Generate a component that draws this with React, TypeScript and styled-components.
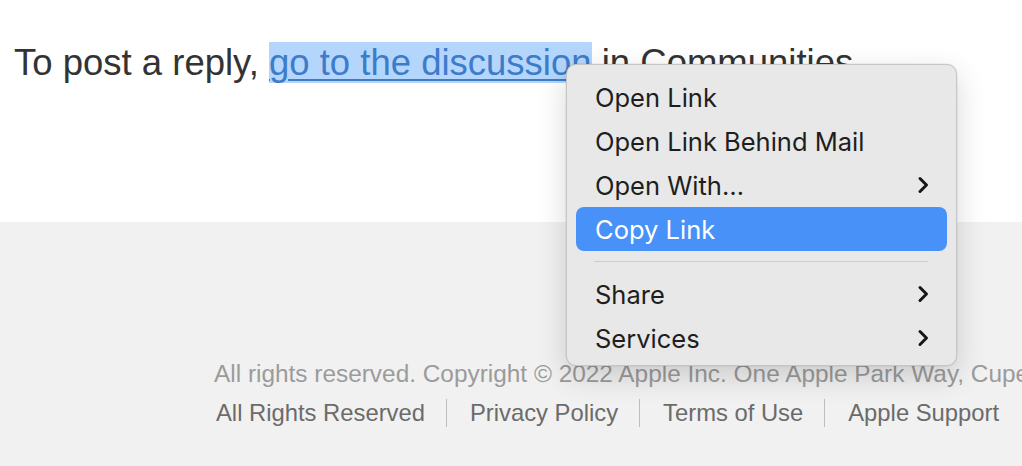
import { FC } from 'react';
import styled, { createGlobalStyle } from 'styled-components';

const GlobalStyle = createGlobalStyle`
  html, body {
    margin: 0;
    padding: 0;
    background: #f1f1f1;
    overflow: hidden;
  }
  #root {
    width: 1022px;
    height: 466px;
  }
`;

type MenuEntry =
  | { kind: 'item'; label: string; submenu?: boolean; active?: boolean }
  | { kind: 'separator' };

const menuEntries: MenuEntry[] = [
  { kind: 'item', label: 'Open Link' },
  { kind: 'item', label: 'Open Link Behind Mail' },
  { kind: 'item', label: 'Open With…', submenu: true },
  { kind: 'item', label: 'Copy Link', active: true },
  { kind: 'separator' },
  { kind: 'item', label: 'Share', submenu: true },
  { kind: 'item', label: 'Services', submenu: true },
];

const footerLinks = ['All Rights Reserved', 'Privacy Policy', 'Terms of Use', 'Apple Support'];

const Chevron: FC<{ light?: boolean }> = ({ light }) => (
  <svg width="14" height="20" viewBox="0 0 14 20" fill="none">
    <path
      d="M4 3.5 L10.5 10 L4 16.5"
      stroke={light ? '#fff' : '#161616'}
      strokeWidth="3"
      strokeLinecap="round"
      strokeLinejoin="round"
    />
  </svg>
);

const App: FC = () => {
  return (
    <Page>
      <GlobalStyle />
      <ReplySection>
        <ReplyText>
          To post a reply, <SelectedLink>go to the discussion</SelectedLink> in Communities.
        </ReplyText>
      </ReplySection>
      <Footer>
        <Copyright>
          All rights reserved. Copyright © 2022 Apple Inc. One Apple Park Way, Cupertino, CA 95014 USA.
        </Copyright>
        <LinkRow>
          {footerLinks.map((link, i) => (
            <LinkGroup key={link}>
              {i > 0 && <Divider />}
              <FooterLink>{link}</FooterLink>
            </LinkGroup>
          ))}
        </LinkRow>
      </Footer>

      <ContextMenu>
        {menuEntries.map((entry, i) =>
          entry.kind === 'separator' ? (
            <Separator key={i} />
          ) : (
            <MenuItem key={i} active={!!entry.active}>
              <span>{entry.label}</span>
              {entry.submenu && <Chevron light={entry.active} />}
            </MenuItem>
          )
        )}
      </ContextMenu>
    </Page>
  );
};

export default App;

const Page = styled.div`
  position: relative;
  width: 1022px;
  height: 466px;
  display: flex;
  flex-direction: column;
  overflow: hidden;
`;

const ReplySection = styled.div`
  height: 222px;
  background: #ffffff;
  padding: 42px 0 0 14px;
  box-sizing: border-box;
`;

const ReplyText = styled.div`
  font-family: 'Liberation Sans', Arial, sans-serif;
  font-size: 36.5px;
  color: #333333;
  white-space: nowrap;
`;

const SelectedLink = styled.span`
  color: #3d7cc9;
  text-decoration: underline;
  text-decoration-thickness: 2px;
  text-underline-offset: 4px;
  background: #b4d6fd;
`;

const Footer = styled.div`
  flex: 1;
  background: #f1f1f1;
  padding: 138px 0 0 214px;
  box-sizing: border-box;
  font-family: 'Liberation Sans', Arial, sans-serif;
  white-space: nowrap;
`;

const Copyright = styled.div`
  font-size: 24.4px;
  color: #9b9b9b;
`;

const LinkRow = styled.div`
  display: flex;
  align-items: center;
  margin-top: 11px;
  padding-left: 2px;
`;

const LinkGroup = styled.div`
  display: flex;
  align-items: center;
`;

const Divider = styled.span`
  width: 1px;
  height: 28px;
  background: #bdbdbd;
  margin: 0 23px 0 21px;
`;

const FooterLink = styled.span`
  font-size: 23.8px;
  color: #6b6b6b;
`;

const ContextMenu = styled.div`
  position: absolute;
  left: 566px;
  top: 64px;
  width: 391px;
  box-sizing: border-box;
  padding: 10px 9px 5px;
  background: #e8e8e8;
  border: 1px solid #c6c6c6;
  border-radius: 10px;
  box-shadow: 0 10px 30px rgba(0, 0, 0, 0.16), 0 0 0 0.5px rgba(0, 0, 0, 0.08);
  font-family: Inter, 'Noto Sans', sans-serif;
`;

const MenuItem = styled.div<{ active: boolean }>`
  height: 44px;
  display: flex;
  align-items: center;
  justify-content: space-between;
  padding: 0 17px 0 19px;
  border-radius: 8px;
  font-size: 25.5px;
  color: ${(p) => (p.active ? '#ffffff' : '#1e1e1e')};
  background: ${(p) => (p.active ? '#4891f8' : 'transparent')};
`;

const Separator = styled.div`
  height: 1px;
  margin: 10px 19px 10px 18px;
  background: #cdcdcd;
`;
